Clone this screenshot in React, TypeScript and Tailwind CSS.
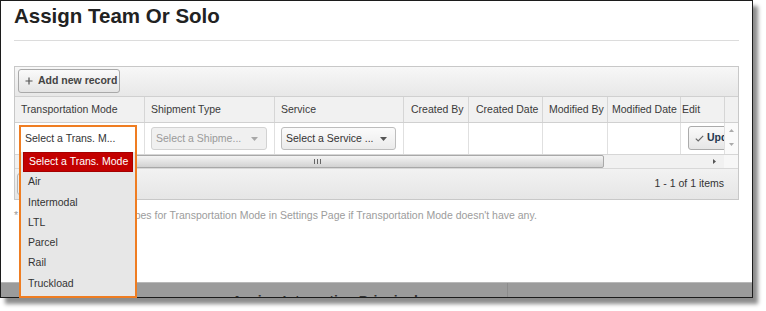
import React from 'react';

const columns = [
  { label: 'Transportation Mode', w: 'w-[130px]', pl: 'pl-[6px]' },
  { label: 'Shipment Type', w: 'w-[130px]', pl: 'pl-[6px]' },
  { label: 'Service', w: 'w-[129px]', pl: 'pl-[6px]' },
  { label: 'Created By', w: 'w-[65px]', pl: 'pl-[7px]' },
  { label: 'Created Date', w: 'w-[74px]', pl: 'pl-[7px]' },
  { label: 'Modified By', w: 'w-[65px]', pl: 'pl-[6px]' },
  { label: 'Modified Date', w: 'w-[73px]', pl: 'pl-[4px]' },
  { label: 'Edit', w: 'w-[44px]', pl: 'pl-[1px]' },
];

const modes = ['Air', 'Intermodal', 'LTL', 'Parcel', 'Rail', 'Truckload'];

const Caret = ({ color }: { color: string }) => (
  <svg width="7" height="4" viewBox="0 0 7 4" className="shrink-0">
    <polygon points="0,0 7,0 3.5,4" fill={color} />
  </svg>
);

const App = () => {
  return (
    <div className="w-[766px] h-[311px] bg-white font-['Liberation_Sans',Arial,sans-serif] text-[10.5px] text-[#333]">
      <div className="relative w-[753px] h-[298px] flex flex-col border border-[#1c1c1c] bg-white shadow-[5px_6px_4px_rgba(0,0,0,0.45)]">
        <div className="pl-[13px] pr-[13px] pt-[3px]">
          <h1 className="text-[20.5px] leading-[24px] font-bold text-[#222]">Assign Team Or Solo</h1>
          <div className="mt-[12px] h-px bg-[#dcdcdc]" />

          {/* grid */}
          <div className="mt-[25px] border border-[#c8c8c8]">
            <div className="h-[30px] pt-[2px] pl-[3px] border-b border-[#d0d0d0] bg-gradient-to-b from-[#f7f7f7] to-[#e8e8e8]">
              <button className="h-[24px] w-[102px] flex items-center gap-[5px] pl-[6px] rounded-[3px] border border-[#a9a9a9] bg-gradient-to-b from-[#fafafa] to-[#e4e4e4] text-[10.5px] font-bold text-[#444]">
                <svg width="8" height="8" viewBox="0 0 8 8">
                  <path d="M4 0.5v7M0.5 4h7" stroke="#555" strokeWidth="1.2" />
                </svg>
                Add new record
              </button>
            </div>

            <div className="flex h-[26px] border-b border-[#d0d0d0] bg-[#f1f1f1] text-[#3a3a3a]">
              {columns.map((c) => (
                <div key={c.label} className={`${c.w} ${c.pl} flex items-center border-r border-[#d6d6d6] overflow-hidden whitespace-nowrap`}>
                  {c.label}
                </div>
              ))}
              <div className="flex-1" />
            </div>

            <div className="flex h-[32px] border-b border-[#d6d6d6] bg-white">
              <div className="w-[130px] pl-[6px] pt-[4px] border-r border-[#e0e0e0]">
                <div className="relative w-[115px] h-[23px] flex items-center justify-between pl-[4px] pr-[7px] bg-white">
                  <span className="whitespace-nowrap">Select a Trans. M...</span>
                  <Caret color="#ffffff" />
                  <div className="absolute z-10 left-[-2px] top-[-2px] w-[118px] h-[173px] border-2 border-[#ef7d22] pointer-events-none" />
                  <div className="absolute z-[5] left-0 top-[25px] w-[114px] h-[144px] bg-[#e7e7e7] px-[2px]">
                    <div className="h-[20px] flex items-center pl-[5px] bg-[#c30000] border border-[#a50000] text-white">
                      Select a Trans. Mode
                    </div>
                    {modes.map((m) => (
                      <div key={m} className="h-[20.3px] flex items-center pl-[5px] text-[#333]">
                        {m}
                      </div>
                    ))}
                  </div>
                </div>
              </div>
              <div className="w-[130px] pl-[6px] pt-[4px] border-r border-[#e0e0e0]">
                <div className="w-[116px] h-[23px] flex items-center justify-between pl-[4px] pr-[8px] rounded-[3px] border border-[#d2d2d2] bg-[#f0f0f0] text-[#9a9a9a]">
                  <span className="whitespace-nowrap">Select a Shipme...</span>
                  <Caret color="#a8a8a8" />
                </div>
              </div>
              <div className="w-[129px] pl-[6px] pt-[4px] border-r border-[#e0e0e0]">
                <div className="w-[115px] h-[23px] flex items-center justify-between pl-[4px] pr-[8px] rounded-[3px] border border-[#bdbdbd] bg-gradient-to-b from-[#fbfbfb] to-[#ebebeb]">
                  <span className="whitespace-nowrap">Select a Service ...</span>
                  <Caret color="#555555" />
                </div>
              </div>
              <div className="w-[65px] border-r border-[#e0e0e0]" />
              <div className="w-[74px] border-r border-[#e0e0e0]" />
              <div className="w-[65px] border-r border-[#e0e0e0]" />
              <div className="w-[73px] border-r border-[#e0e0e0]" />
              <div className="w-[44px] pl-[7px] pt-[3px] border-r border-[#e0e0e0] overflow-hidden">
                <div className="w-[70px] h-[24px] flex items-center gap-[3px] pl-[6px] rounded-[3px] border border-[#ababab] bg-gradient-to-b from-[#fafafa] to-[#e6e6e6] font-bold text-[#24374f]">
                  <svg width="9" height="7" viewBox="0 0 9 7">
                    <path d="M0.8 3.6l2.4 2.4L8.2 0.8" stroke="#666" strokeWidth="1.2" fill="none" />
                  </svg>
                  Update
                </div>
              </div>
              <div className="flex-1 flex flex-col items-center pt-[6px] gap-[11px] bg-[#fafafa]">
                <svg width="5" height="3" viewBox="0 0 5 3"><polygon points="0,3 5,3 2.5,0" fill="#aaa" /></svg>
                <svg width="5" height="3" viewBox="0 0 5 3"><polygon points="0,0 5,0 2.5,3" fill="#aaa" /></svg>
              </div>
            </div>

            <div className="flex h-[13px] bg-[#f1f1f1]">
              <div className="w-[16px]" />
              <div className="w-[573px] flex items-center justify-center gap-[2px] rounded-[2px] border border-[#a8a8a8] bg-gradient-to-b from-[#f4f4f4] to-[#d2d2d2]">
                <div className="w-px h-[5px] bg-[#666]" />
                <div className="w-px h-[5px] bg-[#666]" />
                <div className="w-px h-[5px] bg-[#666]" />
              </div>
              <div className="w-[120px] flex items-center justify-end pr-[8px]">
                <svg width="3" height="5" viewBox="0 0 3 5"><polygon points="0,0 3,2.5 0,5" fill="#555" /></svg>
              </div>
              <div className="flex-1 bg-[#f7f7f7]" />
            </div>

            <div className="h-[31px] flex items-center justify-between pl-[2px] pr-[14px] border-t border-[#d8d8d8] bg-gradient-to-b from-[#f2f2f2] to-[#e6e6e6]">
              <div className="flex gap-[2px]">
                <div className="w-[22px] h-[22px] rounded-[3px] border border-[#b5b5b5] bg-[#efefef]" />
                <div className="w-[22px] h-[22px] rounded-[3px] border border-[#b5b5b5] bg-[#efefef]" />
              </div>
              <span>1 - 1 of 1 items</span>
            </div>
          </div>

          <p className="mt-[8px] leading-[14px] text-[#9c9c9c] whitespace-nowrap">
            * Please add Shipment Types for Transportation Mode in Settings Page if Transportation Mode doesn't have any.
          </p>
        </div>

        <div className="mt-auto h-[15px] flex overflow-hidden border-t border-[#b8b8b8] bg-[#9b9b9b]">
          <div className="w-[507px] pl-[231px] pt-[10px] border-r border-[#8c8c8c] whitespace-nowrap text-[14px] leading-[16px] font-bold text-[#333]">
            Assign Integration Principal
          </div>
          <div className="flex-1" />
        </div>
      </div>
    </div>
  );
};

export default App;
